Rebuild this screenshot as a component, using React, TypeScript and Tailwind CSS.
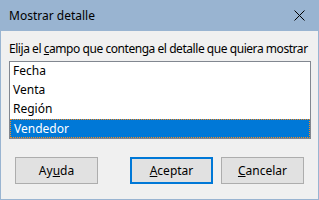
const items = ["Fecha", "Venta", "Región", "Vendedor"];

const App = () => {
  return (
    <div
      className="w-[319px] h-[200px] flex flex-col bg-[#f0f0f0] border-x border-b border-[#99b4d1] text-[12px] text-black"
      style={{ fontFamily: '"Noto Sans", "Open Sans", sans-serif' }}
    >
      <div className="h-[31px] flex items-center justify-between bg-[#99b4d1] pl-[8px] pr-[13px]">
        <span>Mostrar detalle</span>
        <svg width="11" height="11" viewBox="0 0 11 11" className="text-black">
          <path d="M0.5 0.5 L10.5 10.5 M10.5 0.5 L0.5 10.5" stroke="currentColor" strokeWidth="1" />
        </svg>
      </div>

      <div className="flex flex-col px-[8px]">
        <div className="h-[16px] mt-[10px] leading-[16px] whitespace-nowrap tracking-[-0.45px]">
          Elija el <u>c</u>ampo que contenga el detalle que quiera mostrar
        </div>
        <div className="mt-[4px] w-[302px] h-[78px] border border-[#828790] bg-white flex flex-col">
          {items.map((item, i) => {
            const selected = i === items.length - 1;
            return (
              <div
                key={item}
                className={`h-[19px] leading-[18px] pl-[3px] ${
                  selected
                    ? "bg-[#0078d7] text-white border border-dotted border-[#ff8c1a] pl-[2px]"
                    : ""
                }`}
              >
                {item}
              </div>
            );
          })}
        </div>

        <div className="flex mt-[18px] pl-[6px]">
          <button className="w-[83px] h-[27px] bg-[#e1e1e1] border border-[#adadad]">
            Ay<u>u</u>da
          </button>
          <button className="w-[83px] h-[27px] ml-[32px] bg-[#e1e1e1] border-2 border-[#0078d7]">
            <u>A</u>ceptar
          </button>
          <button className="w-[83px] h-[27px] ml-[8px] bg-[#e1e1e1] border border-[#adadad]">
            <u>C</u>ancelar
          </button>
        </div>
      </div>
    </div>
  );
};

export default App;
